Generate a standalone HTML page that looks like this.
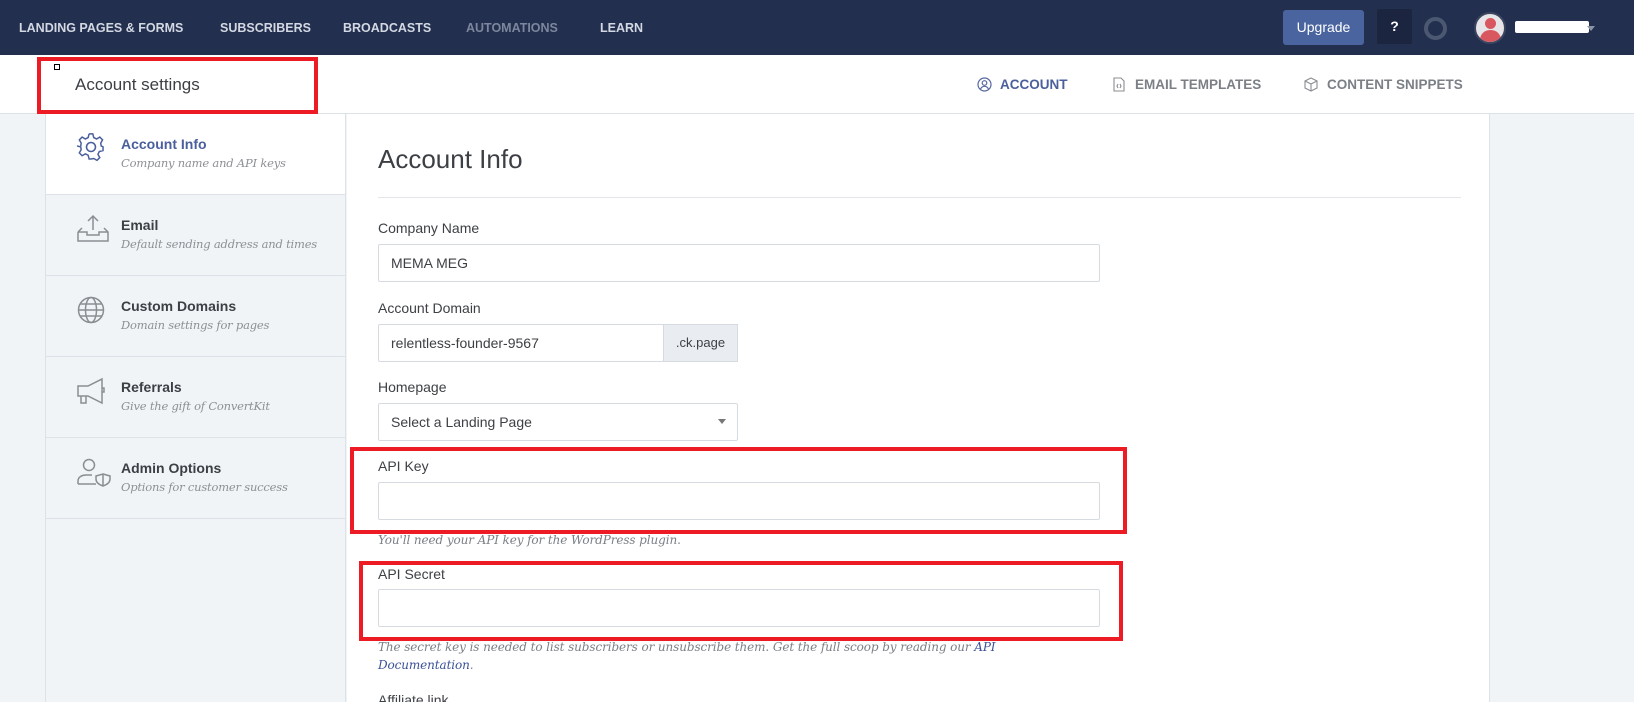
<!DOCTYPE html>
<html><head><meta charset="utf-8">
<style>
*{box-sizing:border-box;margin:0;padding:0}
body{width:1634px;height:711px;overflow:hidden;background:#fff;font-family:"Liberation Sans",sans-serif;position:relative}
.a{position:absolute}
.nav{left:0;top:0;width:1634px;height:55px;background:#222f4f}
.ni{top:21px;font-size:12.5px;font-weight:bold;color:#d3d8e2;white-space:nowrap}
.sub{left:0;top:55px;width:1634px;height:59px;background:#fff;border-bottom:1px solid #dde2e8}
.tab{top:77px;font-size:13.5px;font-weight:bold;color:#7b7f86;white-space:nowrap}
.gray{left:0;top:114px;width:1634px;height:588px;background:#f1f4f7}
.side{left:45px;top:114px;width:301px;height:588px;background:#f1f4f7;border-left:1px solid #dde2e8;border-right:1px solid #dde2e8}
.it{position:absolute;left:0;width:299px;height:81px;border-bottom:1px solid #dde2e8}
.it .t{position:absolute;left:75px;top:22px;font-size:14px;font-weight:bold;color:#3c3f44}
.it .s{position:absolute;left:75px;top:42px;font-size:11.5px;font-style:italic;font-family:"DejaVu Serif","Liberation Serif",serif;color:#8c8f94;white-space:nowrap;letter-spacing:-0.2px}
.it svg{position:absolute;left:30px;top:19px}
.panel{left:347px;top:114px;width:1143px;height:588px;background:#fff;border-right:1px solid #dde2e8}
.lbl{left:378px;font-size:14px;color:#3d4045}
.inp{left:378px;width:722px;height:38px;background:#fff;border:1px solid #d6dbe1;border-radius:2px;font-size:14px;color:#3d4045;padding:10px 12px}
.help{left:378px;font-size:12px;font-style:italic;font-family:"DejaVu Serif","Liberation Serif",serif;color:#7b7f86;white-space:nowrap;letter-spacing:-0.1px}
.red{border:4px solid #ed1c24}
</style></head><body>
<div class="a nav"></div>
<div class="a ni" style="left:19px">LANDING PAGES &amp; FORMS</div>
<div class="a ni" style="left:220px">SUBSCRIBERS</div>
<div class="a ni" style="left:343px">BROADCASTS</div>
<div class="a ni" style="left:466px;color:#7c869c">AUTOMATIONS</div>
<div class="a ni" style="left:600px">LEARN</div>
<div class="a" style="left:1283px;top:10px;width:81px;height:35px;background:#4a64a0;border-radius:3px;color:#fff;font-size:14px;text-align:center;line-height:35px">Upgrade</div>
<div class="a" style="left:1377px;top:9px;width:35px;height:35px;background:#1b2540;border-radius:2px;color:#fff;font-size:14px;font-weight:bold;text-align:center;line-height:35px">?</div>
<div class="a" style="left:1424px;top:17px;width:23px;height:23px;border:4px solid #4c5871;border-radius:50%"></div>
<div class="a" style="left:1474px;top:12px;width:32px;height:32px;border-radius:50%;background:#e6e6e9;border:2px solid #3b4560;overflow:hidden">
 <div class="a" style="left:9px;top:4px;width:11px;height:11px;border-radius:50%;background:#d9575f"></div>
 <div class="a" style="left:4px;top:16px;width:21px;height:16px;border-radius:10px 10px 0 0;background:#d9575f"></div>
</div>
<div class="a" style="left:1515px;top:21px;width:74px;height:12px;background:#fff;border-radius:2px"></div>
<div class="a" style="left:1587px;top:26px;width:0;height:0;border-left:4px solid transparent;border-right:4px solid transparent;border-top:5px solid #8a93a8"></div>

<div class="a sub"></div>
<div class="a red" style="left:37px;top:57px;width:281px;height:57px"></div>
<div class="a" style="left:54px;top:64px;width:6px;height:6px;border:1px solid #000"></div>
<div class="a" style="left:75px;top:75px;font-size:17px;color:#3c3f44">Account settings</div>
<svg class="a" style="left:977px;top:77px" width="15" height="15" viewBox="0 0 15 15" fill="none" stroke="#5468a0" stroke-width="1.2"><circle cx="7.5" cy="7.5" r="6.5"/><circle cx="7.5" cy="6" r="2.3"/><path d="M3.5 12c1-2 2.5-2.7 4-2.7s3 .7 4 2.7"/></svg>
<div class="a tab" style="left:1000px;color:#4a5f9c">ACCOUNT</div>
<svg class="a" style="left:1113px;top:77px" width="12" height="15" viewBox="0 0 12 15" fill="none" stroke="#8a8d92" stroke-width="1.1"><path d="M1 1h7l3 3v10H1z"/><path d="M5 7l-1 2 1 2M7 7l1 2-1 2"/></svg>
<div class="a tab" style="left:1135px">EMAIL TEMPLATES</div>
<svg class="a" style="left:1304px;top:77px" width="14" height="15" viewBox="0 0 14 15" fill="none" stroke="#8a8d92" stroke-width="1.1"><path d="M7 1l6 3v7l-6 3-6-3V4z"/><path d="M1 4l6 3 6-3M7 7v7"/></svg>
<div class="a tab" style="left:1327px">CONTENT SNIPPETS</div>

<div class="a gray"></div>
<div class="a side">
 <div class="it" style="top:0;background:#fff">
  <svg width="30" height="30" viewBox="0 0 30 30" fill="none" stroke="#4a5f9c" stroke-width="1.6"><path d="M13 2h4l1 4 3 1.5 3.5-2 3 3-2 3.5L26 15l2 1v4l-4 1-1.5 3 2 3.5-3 3-3.5-2L15 29l-1 0h-1l-1-4-3-1.5-3.5 2-3-3 2-3.5L4 16l-4-1v-0 M13 2l-1 4-3 1.5-3.5-2-3 3 2 3.5L4 15" transform="translate(1 -1) scale(0.93)"/><circle cx="15" cy="14" r="4.5"/></svg>
  <div class="t" style="color:#4a5f9c">Account Info</div><div class="s">Company name and API keys</div></div>
 <div class="it" style="top:81px">
  <svg width="34" height="30" viewBox="0 0 34 30" fill="none" stroke="#8a8d92" stroke-width="1.5"><path d="M2 18v9h30v-9l-4-4M2 18l4-4M2 18h9v3h12v-3h9"/><path d="M17 2v14M12 7l5-5 5 5"/></svg>
  <div class="t">Email</div><div class="s">Default sending address and times</div></div>
 <div class="it" style="top:162px">
  <svg width="30" height="30" viewBox="0 0 30 30" fill="none" stroke="#8a8d92" stroke-width="1.5"><circle cx="15" cy="15" r="12.5"/><ellipse cx="15" cy="15" rx="5.5" ry="12.5"/><path d="M2.5 15h25M4.5 9h21M4.5 21h21"/></svg>
  <div class="t">Custom Domains</div><div class="s">Domain settings for pages</div></div>
 <div class="it" style="top:243px">
  <svg width="32" height="30" viewBox="0 0 32 30" fill="none" stroke="#8a8d92" stroke-width="1.5"><path d="M2 10h10l14-7v24L12 20H2z"/><path d="M5 20v7h5v-7M26 12h2v4h-2"/></svg>
  <div class="t">Referrals</div><div class="s">Give the gift of ConvertKit</div></div>
 <div class="it" style="top:324px">
  <svg width="36" height="30" viewBox="0 0 36 30" fill="none" stroke="#8a8d92" stroke-width="1.5"><circle cx="13" cy="8" r="5.5"/><path d="M2 27v-3c0-4 4-6 8-6h6"/><path d="M2 27h18"/><path d="M27 17l7 2v3c0 4-4 6-7 7-3-1-7-3-7-7v-3z"/><path d="M27 17v12"/></svg>
  <div class="t">Admin Options</div><div class="s">Options for customer success</div></div>
</div>

<div class="a panel"></div>
<div class="a" style="left:378px;top:144px;font-size:26px;font-weight:300;color:#3c3f44">Account Info</div>
<div class="a" style="left:378px;top:197px;width:1083px;height:1px;background:#e3e6ea"></div>
<div class="a lbl" style="top:220px">Company Name</div>
<div class="a inp" style="top:244px">MEMA MEG</div>
<div class="a lbl" style="top:300px">Account Domain</div>
<div class="a inp" style="top:324px;width:286px">relentless-founder-9567</div>
<div class="a" style="left:663px;top:324px;width:75px;height:38px;background:#e9edf1;border:1px solid #d6dbe1;font-size:13px;color:#3d4045;text-align:center;line-height:36px">.ck.page</div>
<div class="a lbl" style="top:379px">Homepage</div>
<div class="a inp" style="top:403px;width:360px">Select a Landing Page</div>
<div class="a" style="left:718px;top:419px;border-left:4px solid transparent;border-right:4px solid transparent;border-top:5px solid #777"></div>
<div class="a lbl" style="top:458px">API Key</div>
<div class="a inp" style="top:482px"></div>
<div class="a red" style="left:350px;top:447px;width:777px;height:87px"></div>
<div class="a help" style="top:533px">You'll need your API key for the WordPress plugin.</div>
<div class="a lbl" style="top:566px">API Secret</div>
<div class="a inp" style="top:589px"></div>
<div class="a red" style="left:359px;top:561px;width:764px;height:80px"></div>
<div class="a help" style="top:640px">The secret key is needed to list subscribers or unsubscribe them. Get the full scoop by reading our <span style="color:#3b5296">API</span></div>
<div class="a help" style="top:658px;color:#3b5296">Documentation<span style="color:#7b7f86">.</span></div>
<div class="a lbl" style="top:692px">Affiliate link</div>
<div class="a" style="left:0;top:702px;width:1634px;height:9px;background:#fff"></div>
</body></html>
